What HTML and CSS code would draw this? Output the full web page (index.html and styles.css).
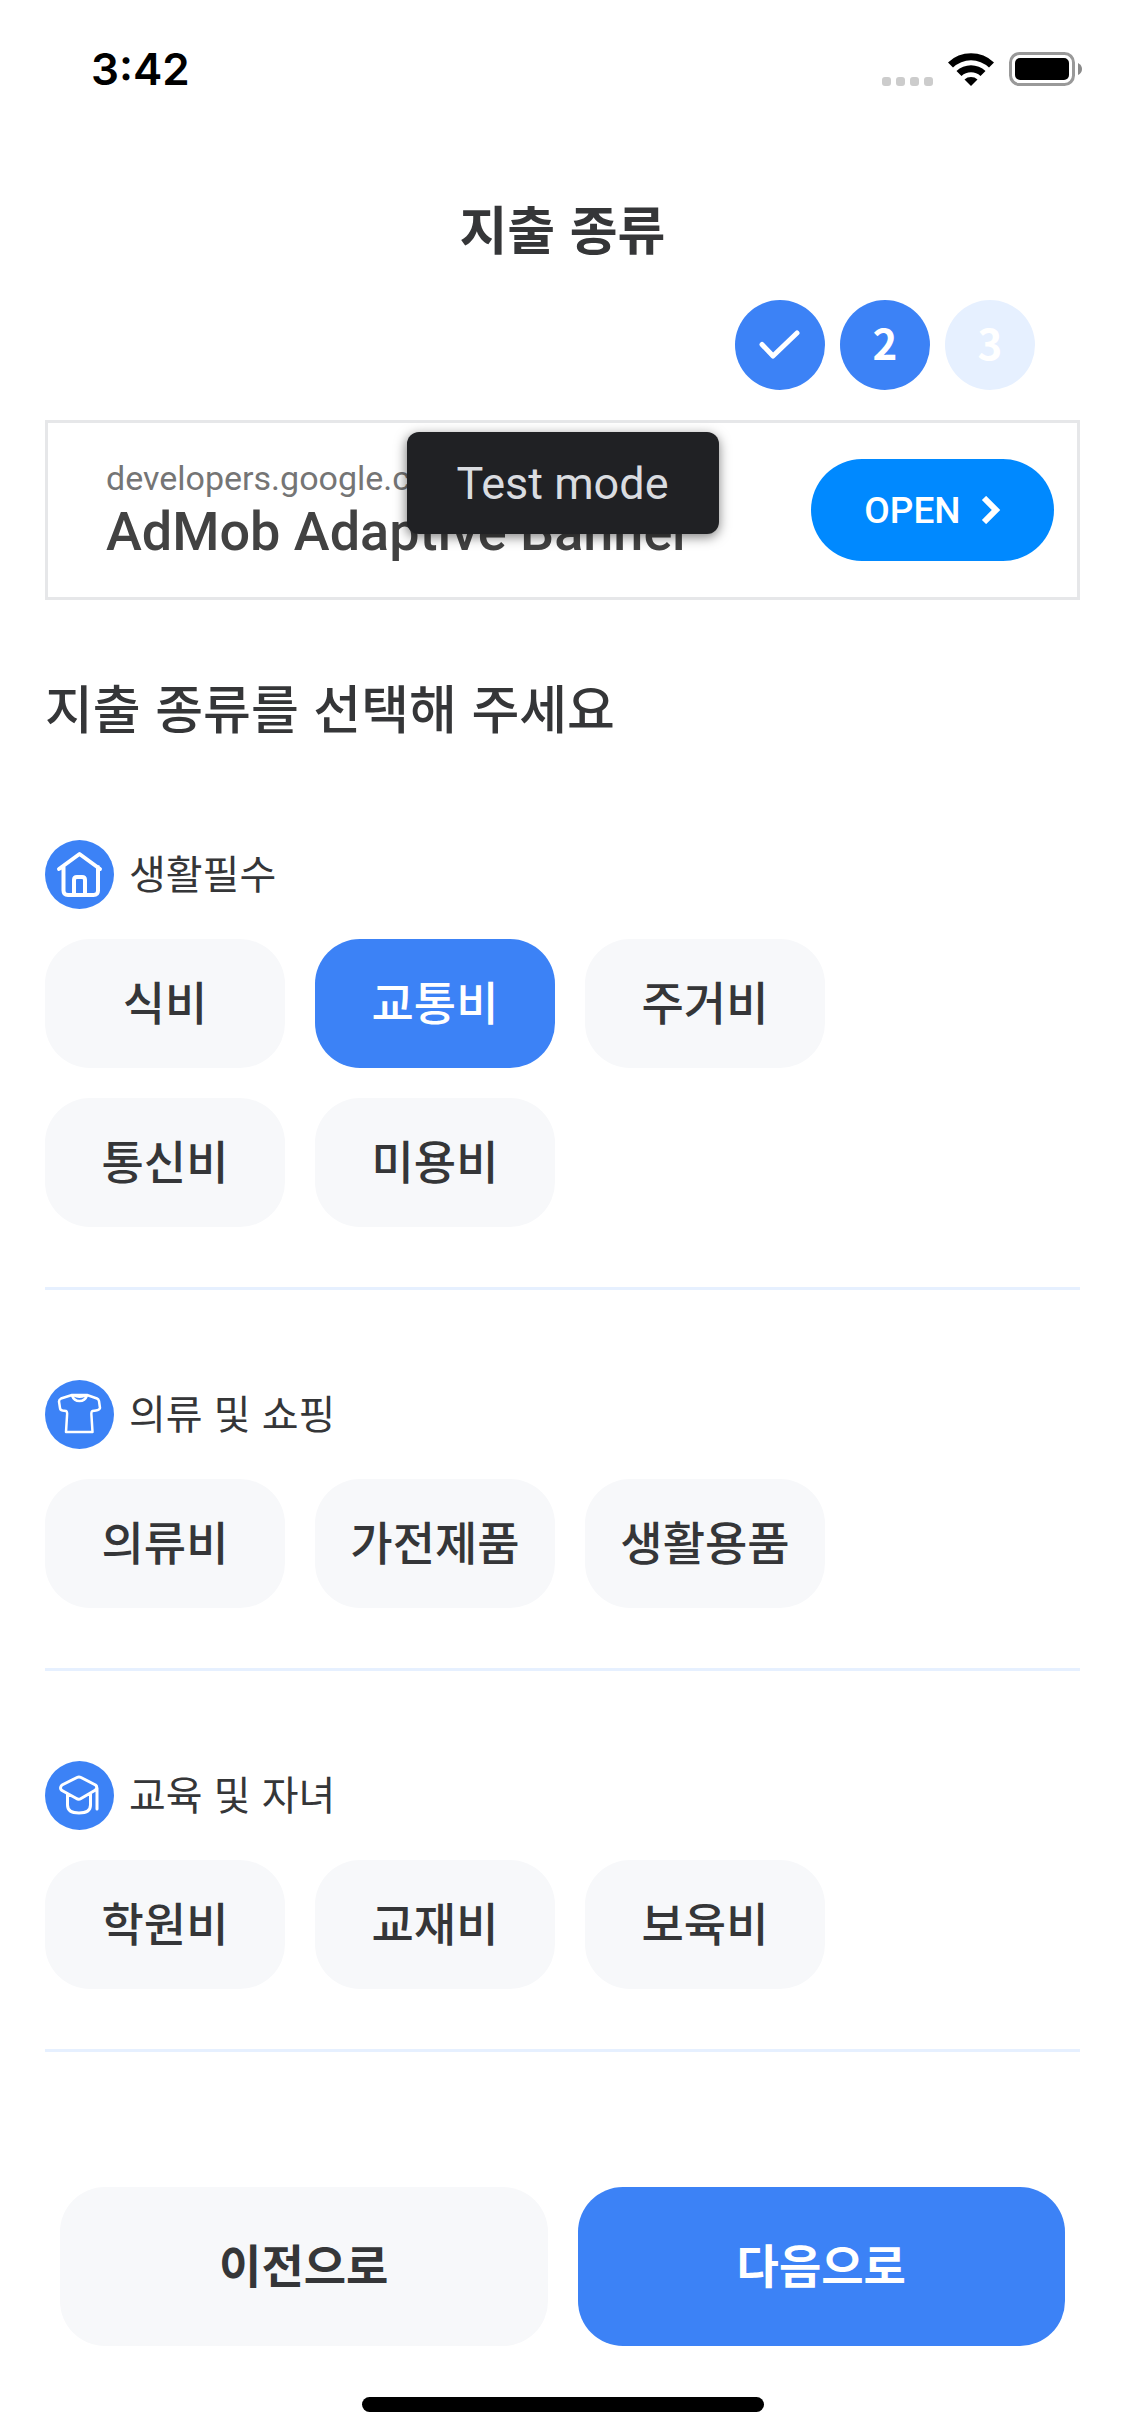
FILE: index.html
```html
<!DOCTYPE html>
<html lang="ko">
<head>
<meta charset="utf-8">
<meta name="viewport" content="width=device-width, initial-scale=1">
<title>지출 종류</title>
<link rel="stylesheet" href="styles.css">
</head>
<body>
<div class="status-bar">
  <span class="status-time">3:42</span>
  <div class="status-icons">
    <svg class="icon-signal" viewBox="0 0 51 9" aria-hidden="true"><rect width="9" height="9" rx="3"/><rect x="14" width="9" height="9" rx="3"/><rect x="28" width="9" height="9" rx="3"/><rect x="42" width="9" height="9" rx="3"/></svg>
    <svg class="icon-wifi" viewBox="0 0 46 33" aria-hidden="true"><path d="M0 9.500A33 33 0 0 1 46 9.500L41 14.500A26 26 0 0 0 5 14.500Z"/><path d="M8.500 18A21 21 0 0 1 37.500 18L32.500 23A14 14 0 0 0 13.500 23Z"/><path d="M16.500 26.500A10 10 0 0 1 29.500 26.500L23 33Z"/></svg>
    <svg class="icon-battery" viewBox="0 0 73 34" aria-hidden="true"><rect x="1.500" y="1.500" width="63" height="31" rx="9" fill="none" stroke="#999" stroke-width="3"/><rect x="6" y="6" width="54" height="22" rx="5"/><path d="M69 11q4 2 4 6t-4 6z" fill="#8a8a8a"/></svg>
  </div>
</div>

<header class="page-header">
  <h1 class="page-title">지출 종류</h1>
  <ol class="steps">
    <li class="step" aria-label="1"><svg class="icon-check" viewBox="0 0 42 30" aria-hidden="true"><path d="M3 14.500 14 26 38 3"/></svg></li>
    <li class="step" aria-current="step"><span class="step-number">2</span></li>
    <li class="step step-upcoming"><span class="step-number">3</span></li>
  </ol>
</header>

<main class="content">
  <aside class="ad">
    <div class="ad-copy">
      <span class="ad-url">developers.google.com</span>
      <span class="ad-headline">AdMob Adaptive Banner</span>
    </div>
    <a class="ad-action" href="#">OPEN
      <svg class="icon-chevron" viewBox="0 0 20 28" aria-hidden="true"><path d="M3 2 15 14 3 26"/></svg>
    </a>
    <span class="ad-badge">Test mode</span>
  </aside>

  <h2 class="question">지출 종류를 선택해 주세요</h2>

  <section class="category">
    <h3 class="category-title">
      <svg class="category-icon" viewBox="0 0 69 69" aria-hidden="true"><circle cx="34.500" cy="34.500" r="34.500"/><path stroke-width="4" d="M14 29 34.500 14 55 29M18.500 27V50.500Q18.500 55 23 55H48.500Q53 55 53 50.500V27M29 54V40Q29 37 32 37H37Q40 37 40 40V54"/></svg>
      <span class="category-name">생활필수</span>
    </h3>
    <div class="chips">
      <button class="chip" type="button">식비</button>
      <button class="chip" type="button" aria-pressed="true">교통비</button>
      <button class="chip" type="button">주거비</button>
      <button class="chip" type="button">통신비</button>
      <button class="chip" type="button">미용비</button>
    </div>
  </section>

  <section class="category">
    <h3 class="category-title">
      <svg class="category-icon" viewBox="0 0 69 69" aria-hidden="true"><circle cx="34.500" cy="34.500" r="34.500"/><path stroke-width="2.500" d="M27 15H42L52 18.500Q53.500 19 54 21L55 28Q54.500 30 51 30.500L47.500 31Q46 31.500 46.500 36L47.500 52H21L22 36Q22.500 31.500 21 31L17.500 30.500Q15 30 15 28L14 21.500Q14 19.500 16 18.500ZM27 15.500Q29 21 34.500 21T42 15.500M29 15.500Q34 18 40 15.500"/></svg>
      <span class="category-name">의류 및 쇼핑</span>
    </h3>
    <div class="chips">
      <button class="chip" type="button">의류비</button>
      <button class="chip" type="button">가전제품</button>
      <button class="chip" type="button">생활용품</button>
    </div>
  </section>

  <section class="category">
    <h3 class="category-title">
      <svg class="category-icon" viewBox="0 0 69 69" aria-hidden="true"><circle cx="34.500" cy="34.500" r="34.500"/><path stroke-width="3" d="M32 16.500Q34 15.500 36 16.500L50.500 24Q53 26 50.500 29L36 37.500Q33.500 39 31.500 37.500L17 29.500Q14 27 17 24ZM52 27V48M22.500 33V44Q22.500 52 34 52T45.500 44V33"/></svg>
      <span class="category-name">교육 및 자녀</span>
    </h3>
    <div class="chips">
      <button class="chip" type="button">학원비</button>
      <button class="chip" type="button">교재비</button>
      <button class="chip" type="button">보육비</button>
    </div>
  </section>
</main>

<footer class="actions">
  <button class="action" type="button">이전으로</button>
  <button class="action action-primary" type="button">다음으로</button>
</footer>
<div class="home-indicator"></div>
</body>
</html>
```
FILE: styles.css
```css
* {
  box-sizing: border-box;
}

body {
  margin: 0;
  min-height: 100vh;
  display: flex;
  flex-direction: column;
  background: #fff;
  color: #353638;
  font-family: "Noto Sans CJK KR", sans-serif;
}

h1, h2, h3, ol {
  margin: 0;
  padding: 0;
}

button {
  border: 0;
  font-family: inherit;
  color: inherit;
}

/* Status bar */
.status-bar {
  display: flex;
  justify-content: space-between;
  align-items: center;
  height: 138px;
  padding: 0 43px 0 91px;
  color: #000;
}

.status-time {
  font: 600 44px/60px Inter, sans-serif;
}

.status-icons {
  display: flex;
  align-items: flex-end;
  gap: 15px;
}

.icon-signal {
  width: 51px;
  height: 9px;
  fill: #ccc;
}

.icon-wifi {
  width: 46px;
  height: 33px;
}

.icon-battery {
  width: 73px;
  height: 34px;
}

/* Header */
.page-header {
  padding: 50px 90px 30px;
}

.page-title {
  font-size: 52px;
  font-weight: 700;
  line-height: 80px;
  text-align: center;
}

.steps {
  display: flex;
  justify-content: flex-end;
  gap: 15px;
  margin-top: 32px;
  list-style: none;
}

.step {
  display: flex;
  align-items: center;
  justify-content: center;
  width: 90px;
  height: 90px;
  border-radius: 50%;
  background: #3c82f6;
  color: #fff;
}

.step-number {
  padding-bottom: 6px;
  font-size: 42px;
  font-weight: 700;
  line-height: 60px;
}

.step-upcoming {
  background: #e6f0ff;
}

.icon-check {
  width: 42px;
  height: 30px;
  fill: none;
  stroke: #fff;
  stroke-width: 5;
  stroke-linecap: round;
  stroke-linejoin: round;
}

/* Ad banner */
.content {
  padding: 0 45px;
}

.ad {
  position: relative;
  display: flex;
  align-items: center;
  justify-content: space-between;
  height: 180px;
  padding: 0 23px 0 58px;
  border: 3px solid #e6e7e9;
  font-family: Roboto, sans-serif;
}

.ad-copy {
  display: flex;
  flex-direction: column;
  padding-bottom: 4px;
}

.ad-url {
  color: #757575;
  font-size: 34px;
  line-height: 48px;
}

.ad-headline {
  color: #424242;
  font-size: 54px;
  font-weight: 500;
  line-height: 60px;
}

.ad-action {
  display: flex;
  align-items: center;
  justify-content: center;
  gap: 20px;
  width: 243px;
  height: 102px;
  border-radius: 51px;
  background: #0089ff;
  color: #fff;
  font-size: 37px;
  font-weight: 500;
  text-decoration: none;
}

.icon-chevron {
  width: 20px;
  height: 28px;
  fill: none;
  stroke: #fff;
  stroke-width: 6;
}

.ad-badge {
  position: absolute;
  top: 9px;
  left: 50%;
  transform: translateX(-50%);
  padding: 22px 50px 20px;
  border-radius: 12px;
  background: #202124;
  box-shadow: 0 3px 12px rgba(0, 0, 0, 0.5);
  color: #dadce0;
  font-size: 45px;
  line-height: 60px;
  white-space: nowrap;
}

.question {
  padding: 69px 0 95px;
  font-size: 52px;
  font-weight: 500;
  line-height: 76px;
}

/* Categories */
.category {
  padding-bottom: 60px;
  border-bottom: 3px solid #e6f0ff;
}

.category + .category {
  padding-top: 90px;
}

.category-title {
  display: flex;
  align-items: center;
  gap: 15px;
  font-size: 40px;
  font-weight: 400;
  line-height: 60px;
}

.category-name {
  padding-bottom: 6px;
}

.category-icon {
  width: 69px;
  height: 69px;
  fill: none;
  stroke: #fff;
  stroke-linecap: round;
  stroke-linejoin: round;
}

.category-icon circle {
  fill: #3c82f6;
  stroke: none;
}

.chips {
  display: flex;
  flex-wrap: wrap;
  gap: 30px;
  margin-top: 30px;
}

.chip {
  width: 240px;
  height: 129px;
  padding: 0 0 8px;
  border-radius: 45px;
  background: #f7f8fa;
  font-size: 46px;
  font-weight: 500;
}

.chip[aria-pressed="true"] {
  background: #3c82f6;
  color: #fff;
}

/* Footer */
.actions {
  display: flex;
  gap: 30px;
  margin-top: auto;
  padding: 0 60px;
}

.action {
  flex: 1;
  height: 159px;
  padding: 0 0 8px;
  border-radius: 45px;
  background: #f7f8fa;
  font-size: 46px;
  font-weight: 700;
}

.action-primary {
  background: #3c82f6;
  color: #fff;
}

.home-indicator {
  width: 402px;
  height: 15px;
  margin: 51px auto 24px;
  border-radius: 8px;
  background: #000;
}
```
